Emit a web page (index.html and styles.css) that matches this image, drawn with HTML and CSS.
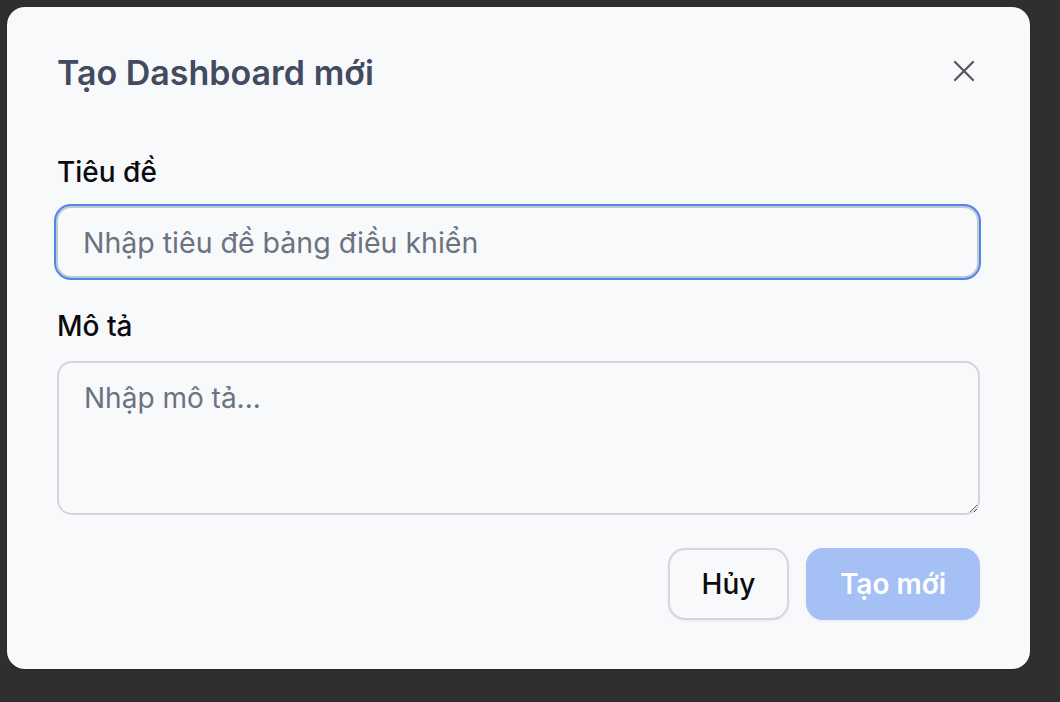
FILE: index.html
```html
<!DOCTYPE html>
<html lang="vi">
<head>
<meta charset="utf-8">
<title>Tạo Dashboard mới</title>
<link rel="stylesheet" href="styles.css">
</head>
<body>
<div class="backdrop">
  <div class="modal">
    <div class="modal-header">
      <h2 class="modal-title">Tạo Dashboard mới</h2>
      <button class="close-btn" aria-label="Đóng">
        <svg width="22" height="22" viewBox="0 0 22 22"><path d="M2 2 L20 20 M20 2 L2 20" stroke="#55565b" stroke-width="2.2" stroke-linecap="round" fill="none"/></svg>
      </button>
    </div>
    <label class="field-label label-first">Tiêu đề</label>
    <input class="text-input focused" type="text" placeholder="Nhập tiêu đề bảng điều khiển">
    <label class="field-label label-second">Mô tả</label>
    <textarea class="text-area" placeholder="Nhập mô tả..."></textarea>
    <div class="actions">
      <button class="btn btn-cancel">Hủy</button>
      <button class="btn btn-primary">Tạo mới</button>
    </div>
  </div>
</div>
</body>
</html>
```

FILE: styles.css
```css
* { box-sizing: border-box; }
html, body { margin: 0; padding: 0; }
body {
  width: 1060px;
  height: 702px;
  overflow: hidden;
  background: #2f2f2f;
  font-family: Inter, "Noto Sans", sans-serif;
}
.backdrop {
  height: 702px;
  padding: 7px 0 0 7px;
}
.modal {
  width: 1023px;
  height: 662px;
  background: #f8f9fb;
  border-radius: 18px;
  padding: 46px 50px 49px 50px;
  display: flex;
  flex-direction: column;
  box-shadow: 0 1px 2px rgba(0,0,0,0.2);
}
.modal-header {
  display: flex;
  align-items: center;
  justify-content: space-between;
  height: 40px;
}
.modal-title {
  margin: 0;
  font-size: 34px;
  line-height: 40px;
  font-weight: 600;
  color: #434b5f;
}
.close-btn {
  background: none;
  border: 0;
  padding: 0;
  width: 22px;
  height: 22px;
  margin-right: 5px;
  margin-top: -4px;
  cursor: pointer;
}
.field-label {
  display: block;
  font-size: 28px;
  line-height: 34px;
  font-weight: 500;
  color: #0b0b0f;
}
.label-first { margin-top: 62px; margin-bottom: 17px; }
.label-second { margin-top: 31px; margin-bottom: 18px; }
.text-input, .text-area {
  width: 923px;
  font-family: Inter, "Noto Sans", sans-serif;
  font-size: 28px;
  color: #1f2937;
  background: #f8f9fb;
  border: 2px solid #d4d6db;
  border-radius: 15px;
  outline: none;
}
.text-input {
  height: 72px;
  padding: 0 25px;
  margin-left: -1px;
  font-size: 28.5px;
}
.text-input.focused {
  border-color: #c4c7ce;
  box-shadow: 0 0 0 2px #4f86ee;
}
.text-area {
  height: 154px;
  padding: 18px 25px;
  resize: vertical;
  line-height: 34px;
}
::placeholder { color: #6b7280; opacity: 1; }
.actions {
  display: flex;
  justify-content: flex-end;
  gap: 17px;
  margin-top: 33px;
}
.btn {
  height: 72px;
  border-radius: 17px;
  font-family: Inter, "Noto Sans", sans-serif;
  font-size: 28px;
  cursor: pointer;
}
.btn-cancel {
  width: 121px;
  background: #f8f9fb;
  border: 2px solid #d4d6db;
  color: #0b0b0f;
  font-weight: 500;
  box-shadow: 0 1px 3px rgba(0,0,0,0.06);
}
.btn-primary {
  width: 174px;
  background: #a4c0f4;
  border: 0;
  color: #ffffff;
  font-weight: 600;
  box-shadow: 0 1px 3px rgba(0,0,0,0.06);
}
```
